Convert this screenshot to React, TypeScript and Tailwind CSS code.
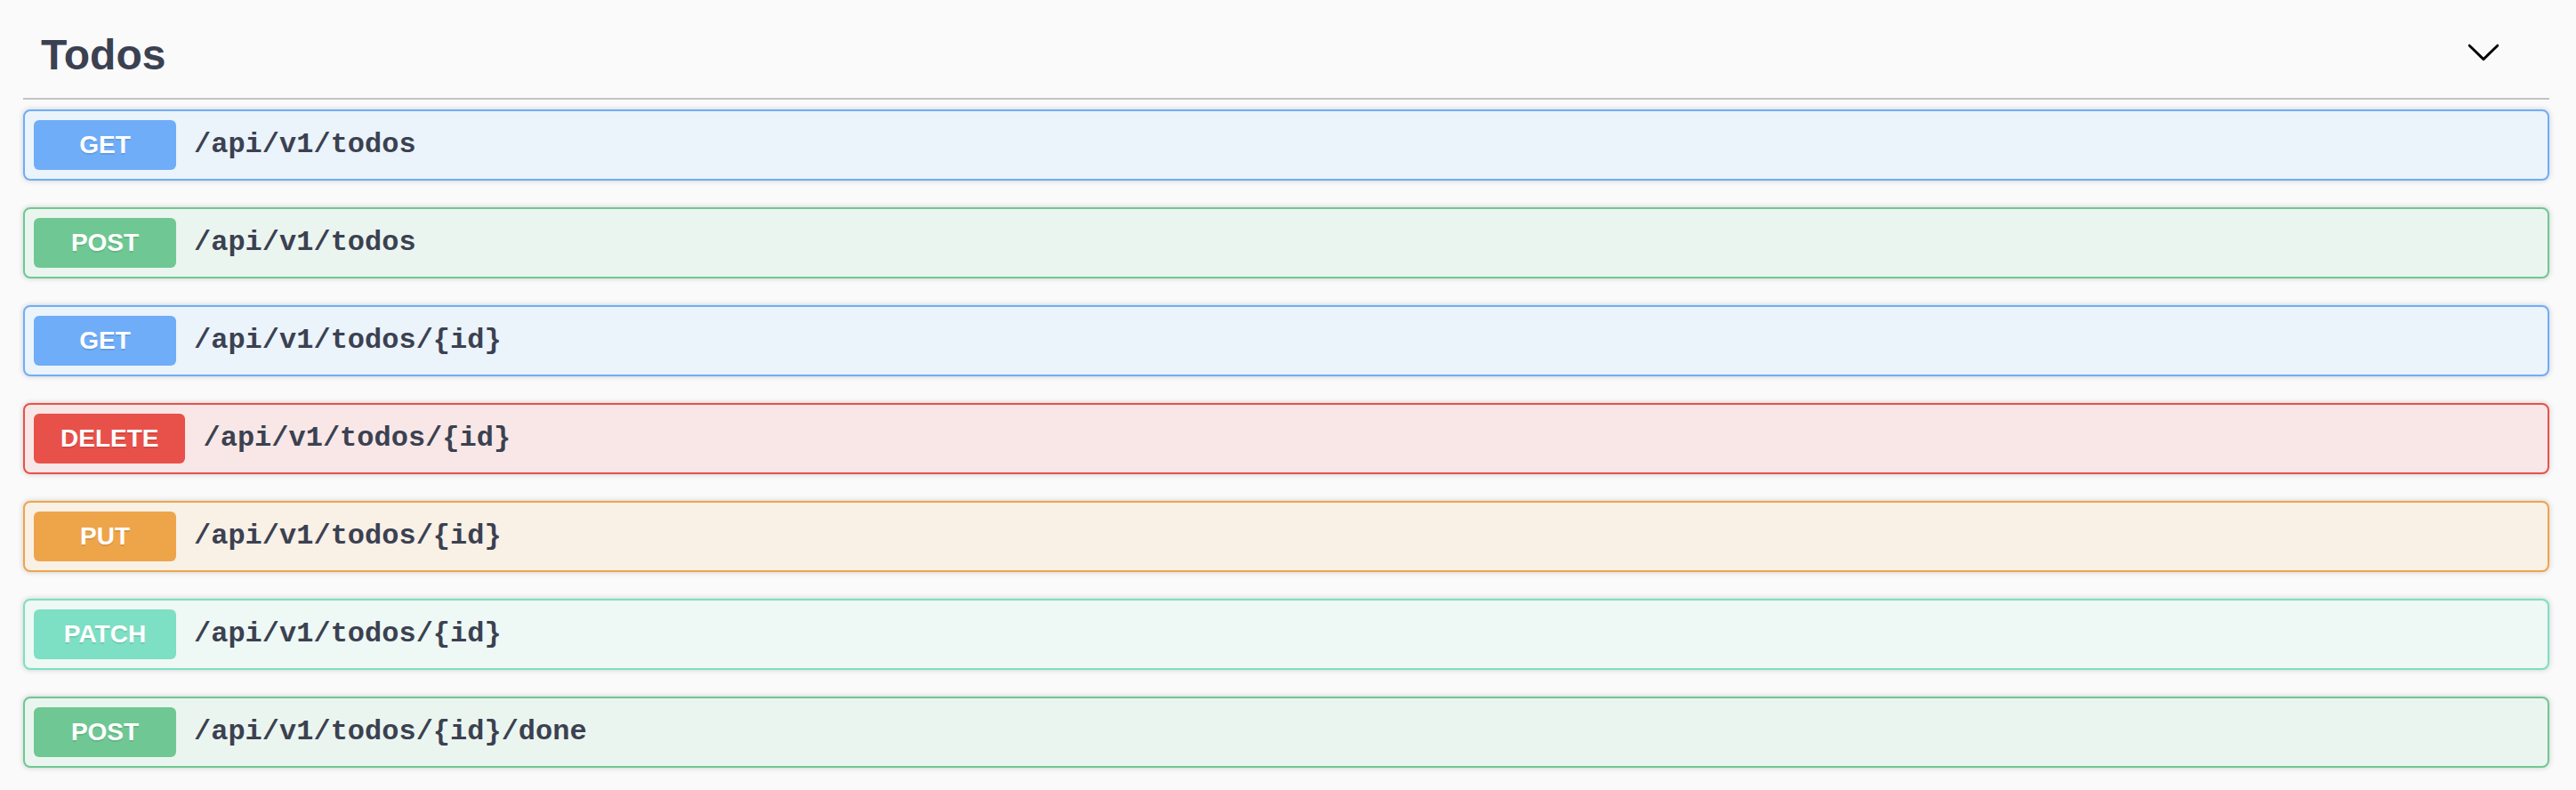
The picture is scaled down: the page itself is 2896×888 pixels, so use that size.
import React from 'react';

type Op = {
  method: string;
  path: string;
  badge: string;
  border: string;
  bg: string;
};

const ops: Op[] = [
  { method: 'GET', path: '/api/v1/todos', badge: 'bg-[#6fadf8]', border: 'border-[#6fadf8]', bg: 'bg-[#ebf3fb]' },
  { method: 'POST', path: '/api/v1/todos', badge: 'bg-[#6fc893]', border: 'border-[#6fc893]', bg: 'bg-[#ebf5ef]' },
  { method: 'GET', path: '/api/v1/todos/{id}', badge: 'bg-[#6fadf8]', border: 'border-[#6fadf8]', bg: 'bg-[#ebf3fb]' },
  { method: 'DELETE', path: '/api/v1/todos/{id}', badge: 'bg-[#e8514a]', border: 'border-[#e8514a]', bg: 'bg-[#f8e7e6]' },
  { method: 'PUT', path: '/api/v1/todos/{id}', badge: 'bg-[#eea54a]', border: 'border-[#eea54a]', bg: 'bg-[#f9f0e6]' },
  { method: 'PATCH', path: '/api/v1/todos/{id}', badge: 'bg-[#7ddfc3]', border: 'border-[#7ddfc3]', bg: 'bg-[#eef8f4]' },
  { method: 'POST', path: '/api/v1/todos/{id}/done', badge: 'bg-[#6fc893]', border: 'border-[#6fc893]', bg: 'bg-[#ebf5ef]' },
];

function Chevron() {
  return (
    <svg width="40" height="40" viewBox="0 0 20 20" className="mr-[54px] mb-[4px] fill-black">
      <path d="M17.418 6.109c.272-.268.709-.268.979 0s.271.701 0 .969l-7.908 7.83c-.27.268-.707.268-.979 0l-7.908-7.83c-.27-.268-.27-.701 0-.969.271-.268.709-.268.979 0L10 13.25l7.418-7.141z" />
    </svg>
  );
}

function Operation({ op }: { op: Op }) {
  return (
    <div
      className={`flex items-center h-[80px] border-2 rounded-[8px] p-[10px] shadow-[0_0_6px_rgba(0,0,0,0.19)] ${op.border} ${op.bg}`}
    >
      <div
        className={`h-[56px] min-w-[160px] px-[30px] rounded-[6px] flex items-center justify-center text-white font-bold text-[28px] font-['Liberation_Sans',Arial,sans-serif] [text-shadow:0_2px_0_rgba(0,0,0,0.1)] ${op.badge}`}
      >
        {op.method}
      </div>
      <div className="px-[20px] text-[32px] font-bold text-[#3b4151] font-['Liberation_Mono','Courier_New',monospace]">
        {op.path}
      </div>
    </div>
  );
}

export default function App() {
  return (
    <div className="min-h-[888px] w-full bg-[#fafafa] pl-[26px] pr-[30px] font-['Liberation_Sans',Arial,sans-serif]">
      <div className="flex items-center justify-between h-[112px] pt-[10px] pl-[20px] border-b-2 border-[#c1c3c7]">
        <h3 className="text-[48px] font-bold text-[#3b4151] mt-[3px]">Todos</h3>
        <Chevron />
      </div>
      <div className="flex flex-col gap-[30px] pt-[11px]">
        {ops.map((op, i) => (
          <Operation key={i} op={op} />
        ))}
      </div>
    </div>
  );
}
